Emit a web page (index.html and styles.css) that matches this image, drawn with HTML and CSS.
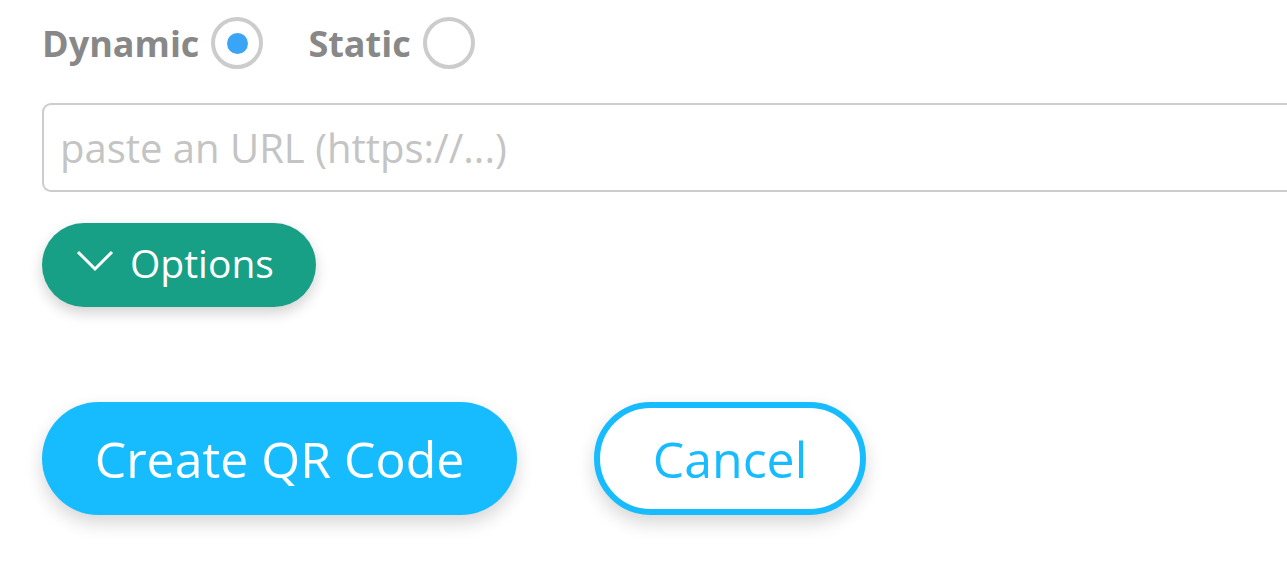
FILE: index.html
```html
<!DOCTYPE html>
<html lang="en">
<head>
  <meta charset="UTF-8" />
  <meta name="viewport" content="width=device-width, initial-scale=1.0"/>
  <title>Create QR Code</title>
  <link rel="stylesheet" href="styles.css">
</head>
<body>

  <form class="qr-form">
    <div class="tipo">
      <label class="radio">
        Dynamic
        <input type="radio" name="tipo" value="dynamic" checked>
        <span class="circulo"></span>
      </label>
      <label class="radio">
        Static
        <input type="radio" name="tipo" value="static">
        <span class="circulo"></span>
      </label>
    </div>

    <input class="url" type="text" placeholder="paste an URL (https://...)">

    <button type="button" class="btn-opciones">
      <svg width="38" height="24" viewBox="0 0 38 24">
        <path d="M2 2 L19 19 L36 2" fill="none" stroke="white" stroke-width="3"/>
      </svg>
      Options
    </button>

    <div class="acciones">
      <button type="submit" class="btn-crear">Create QR Code</button>
      <button type="button" class="btn-cancelar">Cancel</button>
    </div>
  </form>

</body>
</html>
```

FILE: styles.css
```css
:root {
  --color-blue: #16bcfe;
  --color-teal: #17a085;
  --color-grey: #888;
  --color-line: #cccccc;
}

* {
  margin: 0;
  padding: 0;
  box-sizing: border-box;
}

body {
  font-family: 'Open Sans', sans-serif;
  background: white;
}

.qr-form {
  padding: 15px 0 40px 42px;
}

.tipo {
  display: flex;
  gap: 45px;
  align-items: center;
  height: 56px;
}

.radio {
  display: flex;
  align-items: center;
  gap: 12px;
  font-size: 36px;
  font-weight: bold;
  color: var(--color-grey);
}

.radio input {
  display: none;
}

.circulo {
  width: 52px;
  height: 52px;
  border: 4px solid var(--color-line);
  border-radius: 50%;
  display: flex;
  align-items: center;
  justify-content: center;
}

.radio input:checked + .circulo::after {
  content: "";
  width: 21px;
  height: 21px;
  border-radius: 50%;
  background: #3aa4f6;
}

/* el campo sigue más allá del borde derecho */
.url {
  display: block;
  margin-top: 32px;
  width: 100%;
  height: 89px;
  border: 2px solid var(--color-line);
  border-right: none;
  border-radius: 9px 0 0 9px;
  padding: 0 16px;
  font-family: 'Open Sans', sans-serif;
  font-size: 40px;
  color: #555;
  outline: none;
}

.url::placeholder {
  color: #c4c4c4;
}

.btn-opciones {
  display: flex;
  align-items: center;
  gap: 16px;
  margin-top: 31px;
  width: 274px;
  height: 84px;
  padding: 0 0 6px 34px;
  background: var(--color-teal);
  color: white;
  border: none;
  border-radius: 42px;
  font-family: 'Open Sans', sans-serif;
  font-size: 39px;
  box-shadow: 0 6px 14px rgba(0,0,0,0.18);
  cursor: pointer;
}

.acciones {
  display: flex;
  gap: 77px;
  margin-top: 95px;
}

.btn-crear, .btn-cancelar {
  height: 113px;
  border-radius: 57px;
  font-family: 'Open Sans', sans-serif;
  font-size: 50px;
  box-shadow: 0 8px 18px rgba(0,0,0,0.16);
  cursor: pointer;
}

.btn-crear {
  width: 475px;
  background: var(--color-blue);
  color: white;
  border: none;
}

.btn-cancelar {
  width: 272px;
  background: white;
  color: var(--color-blue);
  border: 6px solid var(--color-blue);
}
```
